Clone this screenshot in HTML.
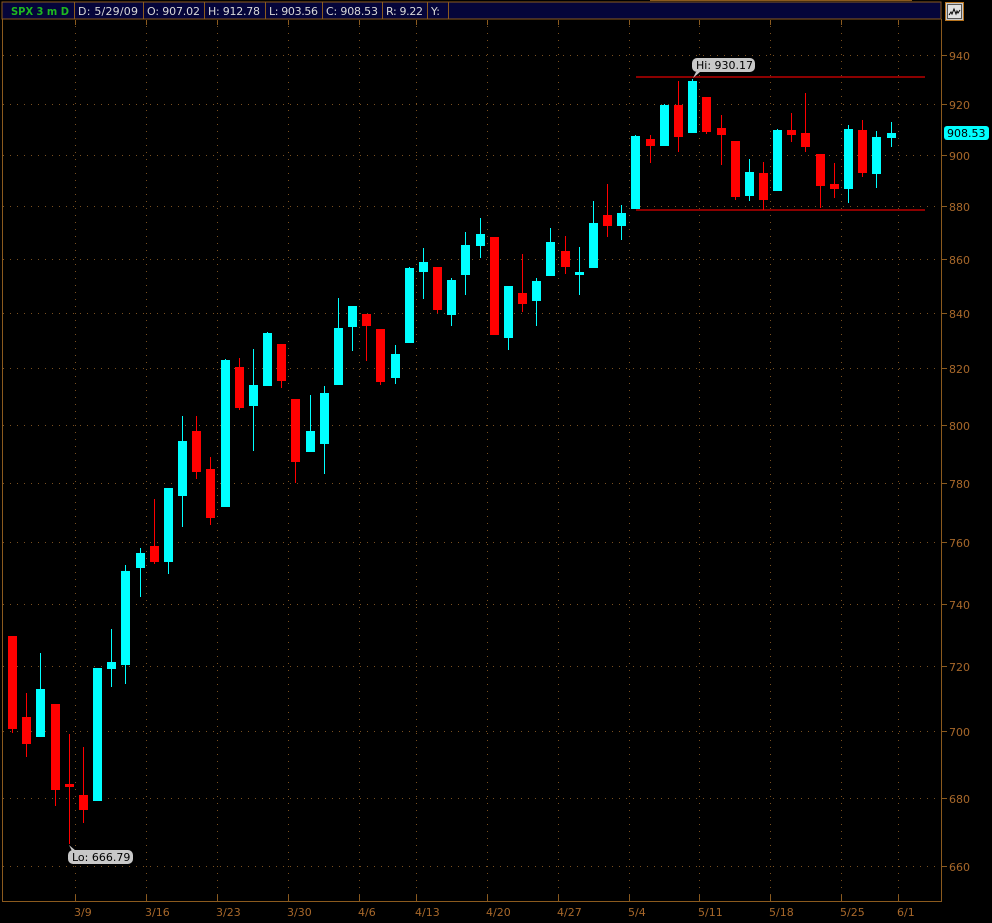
<!DOCTYPE html>
<html><head><meta charset="utf-8"><style>
html,body{margin:0;padding:0;background:#000;width:992px;height:923px;overflow:hidden}
svg{display:block}
text{font-family:"DejaVu Sans","Liberation Sans",sans-serif}
</style></head><body>
<svg width="992" height="923" xmlns="http://www.w3.org/2000/svg">
<rect width="992" height="923" fill="#000"/>
<line x1="650" y1="0.5" x2="912" y2="0.5" stroke="#8a5a1e"/>
<!-- header -->
<rect x="2" y="2" width="939" height="17" fill="#05053a" stroke="#8b5a1e"/>
<g stroke="#8b5a1e"><line x1="74.5" y1="2" x2="74.5" y2="19"/><line x1="143.5" y1="2" x2="143.5" y2="19"/><line x1="204.5" y1="2" x2="204.5" y2="19"/><line x1="265.5" y1="2" x2="265.5" y2="19"/><line x1="322.5" y1="2" x2="322.5" y2="19"/><line x1="382.5" y1="2" x2="382.5" y2="19"/><line x1="427.5" y1="2" x2="427.5" y2="19"/><line x1="448.5" y1="2" x2="448.5" y2="19"/></g>
<g font-size="11" fill="#d8d8d8">
<text x="11" y="15" fill="#1fb81f" font-weight="bold" textLength="58" lengthAdjust="spacingAndGlyphs">SPX 3 m D</text>
<text x="78" y="15" textLength="60">D: 5/29/09</text>
<text x="147" y="15" textLength="53">O: 907.02</text>
<text x="208" y="15" textLength="52">H: 912.78</text>
<text x="269" y="15" textLength="49">L: 903.56</text>
<text x="326" y="15" textLength="52">C: 908.53</text>
<text x="386" y="15" textLength="37">R: 9.22</text>
<text x="431" y="15">Y:</text>
</g>
<rect x="945.5" y="2.5" width="18" height="18" fill="#c8c8c8" stroke="#b8741e"/>
<rect x="947.5" y="4.5" width="14" height="14" fill="#e0e0e0" stroke="#555"/>
<path d="M949 15 L951 12 L952 14 L954 9 L956 14 L957 11 L958 13 L960 10" fill="none" stroke="#000" stroke-width="1"/>
<!-- frame -->
<line x1="2.5" y1="19" x2="2.5" y2="901" stroke="#8b5a1e"/>
<line x1="2" y1="901.5" x2="942" y2="901.5" stroke="#8b5a1e"/>
<line x1="941.5" y1="19" x2="941.5" y2="902" stroke="#8b5a1e"/>
<!-- grid -->
<g stroke="#7a5020" stroke-dasharray="1 6">
<line x1="3" y1="55.5" x2="941" y2="55.5"/><line x1="3" y1="104.5" x2="941" y2="104.5"/><line x1="3" y1="155.5" x2="941" y2="155.5"/><line x1="3" y1="206.5" x2="941" y2="206.5"/><line x1="3" y1="259.5" x2="941" y2="259.5"/><line x1="3" y1="313.5" x2="941" y2="313.5"/><line x1="3" y1="368.5" x2="941" y2="368.5"/><line x1="3" y1="425.5" x2="941" y2="425.5"/><line x1="3" y1="483.5" x2="941" y2="483.5"/><line x1="3" y1="542.5" x2="941" y2="542.5"/><line x1="3" y1="604.5" x2="941" y2="604.5"/><line x1="3" y1="666.5" x2="941" y2="666.5"/><line x1="3" y1="731.5" x2="941" y2="731.5"/><line x1="3" y1="798.5" x2="941" y2="798.5"/><line x1="3" y1="866.5" x2="941" y2="866.5"/>
<line x1="75.5" y1="26" x2="75.5" y2="895"/><line x1="146.5" y1="26" x2="146.5" y2="895"/><line x1="217.5" y1="26" x2="217.5" y2="895"/><line x1="288.5" y1="26" x2="288.5" y2="895"/><line x1="359.5" y1="26" x2="359.5" y2="895"/><line x1="416.5" y1="26" x2="416.5" y2="895"/><line x1="487.5" y1="26" x2="487.5" y2="895"/><line x1="558.5" y1="26" x2="558.5" y2="895"/><line x1="629.5" y1="26" x2="629.5" y2="895"/><line x1="699.5" y1="26" x2="699.5" y2="895"/><line x1="770.5" y1="26" x2="770.5" y2="895"/><line x1="841.5" y1="26" x2="841.5" y2="895"/><line x1="898.5" y1="26" x2="898.5" y2="895"/>
</g>
<g stroke="#8b5a1e">
<path d="M75.5 20v5M146.5 20v5M217.5 20v5M288.5 20v5M359.5 20v5M416.5 20v5M487.5 20v5M558.5 20v5M629.5 20v5M699.5 20v5M770.5 20v5M841.5 20v5M898.5 20v5"/>
<path d="M75.5 895v6M146.5 895v6M217.5 895v6M288.5 895v6M359.5 895v6M416.5 895v6M487.5 895v6M558.5 895v6M629.5 895v6M699.5 895v6M770.5 895v6M841.5 895v6M898.5 895v6"/>
<path d="M941 55.5h6M941 104.5h6M941 155.5h6M941 206.5h6M941 259.5h6M941 313.5h6M941 368.5h6M941 425.5h6M941 483.5h6M941 542.5h6M941 604.5h6M941 666.5h6M941 731.5h6M941 798.5h6M941 866.5h6"/>
</g>
<g font-size="11" fill="#a8682a">
<text x="949" y="60">940</text><text x="949" y="109">920</text><text x="949" y="160">900</text><text x="949" y="211">880</text><text x="949" y="264">860</text><text x="949" y="318">840</text><text x="949" y="373">820</text><text x="949" y="430">800</text><text x="949" y="488">780</text><text x="949" y="547">760</text><text x="949" y="609">740</text><text x="949" y="671">720</text><text x="949" y="736">700</text><text x="949" y="803">680</text><text x="949" y="871">660</text>
<text x="74" y="916">3/9</text><text x="145" y="916">3/16</text><text x="216" y="916">3/23</text><text x="287" y="916">3/30</text><text x="358" y="916">4/6</text><text x="415" y="916">4/13</text><text x="486" y="916">4/20</text><text x="557" y="916">4/27</text><text x="628" y="916">5/4</text><text x="698" y="916">5/11</text><text x="769" y="916">5/18</text><text x="840" y="916">5/25</text><text x="897" y="916">6/1</text>
</g>
<!-- range lines -->
<line x1="636" y1="77" x2="925" y2="77" stroke="#e00000" stroke-width="1.2"/>
<line x1="636" y1="210" x2="925" y2="210" stroke="#e00000" stroke-width="1.2"/>
<!-- candles -->
<g fill="#ff0000">
<rect x="12" y="636" width="1" height="97"/><rect x="8" y="636" width="9" height="93"/>
<rect x="26" y="693" width="1" height="64"/><rect x="22" y="717" width="9" height="27"/>
<rect x="55" y="704" width="1" height="102"/><rect x="51" y="704" width="9" height="86"/>
<rect x="69" y="734" width="1" height="110"/><rect x="65" y="784" width="9" height="3"/>
<rect x="83" y="747" width="1" height="76"/><rect x="79" y="795" width="9" height="15"/>
<rect x="154" y="499" width="1" height="65"/><rect x="150" y="546" width="9" height="16"/>
<rect x="196" y="416" width="1" height="63"/><rect x="192" y="431" width="9" height="41"/>
<rect x="210" y="457" width="1" height="68"/><rect x="206" y="469" width="9" height="49"/>
<rect x="239" y="358" width="1" height="52"/><rect x="235" y="367" width="9" height="41"/>
<rect x="281" y="344" width="1" height="44"/><rect x="277" y="344" width="9" height="37"/>
<rect x="295" y="399" width="1" height="84"/><rect x="291" y="399" width="9" height="63"/>
<rect x="366" y="314" width="1" height="47"/><rect x="362" y="314" width="9" height="12"/>
<rect x="380" y="329" width="1" height="56"/><rect x="376" y="329" width="9" height="53"/>
<rect x="437" y="267" width="1" height="46"/><rect x="433" y="267" width="9" height="43"/>
<rect x="490" y="237" width="9" height="98"/>
<rect x="522" y="254" width="1" height="58"/><rect x="518" y="293" width="9" height="11"/>
<rect x="565" y="236" width="1" height="38"/><rect x="561" y="251" width="9" height="16"/>
<rect x="607" y="184" width="1" height="53"/><rect x="603" y="215" width="9" height="11"/>
<rect x="650" y="135" width="1" height="28"/><rect x="646" y="139" width="9" height="7"/>
<rect x="678" y="81" width="1" height="71"/><rect x="674" y="105" width="9" height="32"/>
<rect x="706" y="97" width="1" height="37"/><rect x="702" y="97" width="9" height="35"/>
<rect x="721" y="115" width="1" height="50"/><rect x="717" y="128" width="9" height="7"/>
<rect x="735" y="141" width="1" height="59"/><rect x="731" y="141" width="9" height="56"/>
<rect x="763" y="162" width="1" height="48"/><rect x="759" y="173" width="9" height="27"/>
<rect x="791" y="113" width="1" height="29"/><rect x="787" y="130" width="9" height="5"/>
<rect x="805" y="93" width="1" height="59"/><rect x="801" y="133" width="9" height="14"/>
<rect x="820" y="154" width="1" height="54"/><rect x="816" y="154" width="9" height="32"/>
<rect x="834" y="163" width="1" height="35"/><rect x="830" y="184" width="9" height="5"/>
<rect x="862" y="120" width="1" height="57"/><rect x="858" y="130" width="9" height="43"/>
</g>
<g fill="#00ffff">
<rect x="40" y="653" width="1" height="84"/><rect x="36" y="689" width="9" height="48"/>
<rect x="93" y="668" width="9" height="133"/>
<rect x="111" y="629" width="1" height="58"/><rect x="107" y="662" width="9" height="7"/>
<rect x="125" y="565" width="1" height="119"/><rect x="121" y="571" width="9" height="94"/>
<rect x="140" y="548" width="1" height="49"/><rect x="136" y="553" width="9" height="15"/>
<rect x="168" y="488" width="1" height="86"/><rect x="164" y="488" width="9" height="74"/>
<rect x="182" y="416" width="1" height="111"/><rect x="178" y="441" width="9" height="55"/>
<rect x="225" y="359" width="1" height="148"/><rect x="221" y="360" width="9" height="147"/>
<rect x="253" y="349" width="1" height="102"/><rect x="249" y="385" width="9" height="21"/>
<rect x="267" y="332" width="1" height="54"/><rect x="263" y="333" width="9" height="53"/>
<rect x="310" y="395" width="1" height="57"/><rect x="306" y="431" width="9" height="21"/>
<rect x="324" y="386" width="1" height="88"/><rect x="320" y="393" width="9" height="51"/>
<rect x="338" y="298" width="1" height="87"/><rect x="334" y="328" width="9" height="57"/>
<rect x="352" y="306" width="1" height="45"/><rect x="348" y="306" width="9" height="21"/>
<rect x="395" y="345" width="1" height="39"/><rect x="391" y="354" width="9" height="24"/>
<rect x="409" y="267" width="1" height="76"/><rect x="405" y="268" width="9" height="75"/>
<rect x="423" y="248" width="1" height="51"/><rect x="419" y="262" width="9" height="10"/>
<rect x="451" y="278" width="1" height="48"/><rect x="447" y="280" width="9" height="35"/>
<rect x="465" y="232" width="1" height="63"/><rect x="461" y="245" width="9" height="30"/>
<rect x="480" y="218" width="1" height="40"/><rect x="476" y="234" width="9" height="12"/>
<rect x="508" y="286" width="1" height="64"/><rect x="504" y="286" width="9" height="52"/>
<rect x="536" y="278" width="1" height="48"/><rect x="532" y="281" width="9" height="20"/>
<rect x="550" y="228" width="1" height="48"/><rect x="546" y="242" width="9" height="34"/>
<rect x="579" y="247" width="1" height="48"/><rect x="575" y="272" width="9" height="3"/>
<rect x="593" y="201" width="1" height="67"/><rect x="589" y="223" width="9" height="45"/>
<rect x="621" y="205" width="1" height="35"/><rect x="617" y="213" width="9" height="13"/>
<rect x="635" y="135" width="1" height="74"/><rect x="631" y="136" width="9" height="73"/>
<rect x="664" y="104" width="1" height="42"/><rect x="660" y="105" width="9" height="41"/>
<rect x="692" y="79" width="1" height="54"/><rect x="688" y="81" width="9" height="52"/>
<rect x="749" y="159" width="1" height="42"/><rect x="745" y="172" width="9" height="24"/>
<rect x="777" y="129" width="1" height="62"/><rect x="773" y="130" width="9" height="61"/>
<rect x="848" y="125" width="1" height="78"/><rect x="844" y="129" width="9" height="60"/>
<rect x="876" y="131" width="1" height="57"/><rect x="872" y="137" width="9" height="37"/>
<rect x="891" y="122" width="1" height="25"/><rect x="887" y="133" width="9" height="5"/>
</g>
<!-- Hi / Lo labels -->
<path d="M696 72 L693 78 L700 72Z" fill="#c8c8c8"/>
<rect x="692" y="58" width="63" height="14" rx="5" fill="#c8c8c8"/>
<text x="696" y="69" font-size="11" fill="#000">Hi: 930.17</text>
<path d="M69 845 L72 851 L76 851Z" fill="#c8c8c8"/>
<rect x="68" y="850" width="65" height="14" rx="5" fill="#c8c8c8"/>
<text x="72" y="861" font-size="11" fill="#000">Lo: 666.79</text>
<!-- last price -->
<rect x="944" y="126" width="45" height="14" rx="3" fill="#00ffff"/>
<text x="947" y="137" font-size="11" fill="#000">908.53</text>
</svg>
</body></html>
